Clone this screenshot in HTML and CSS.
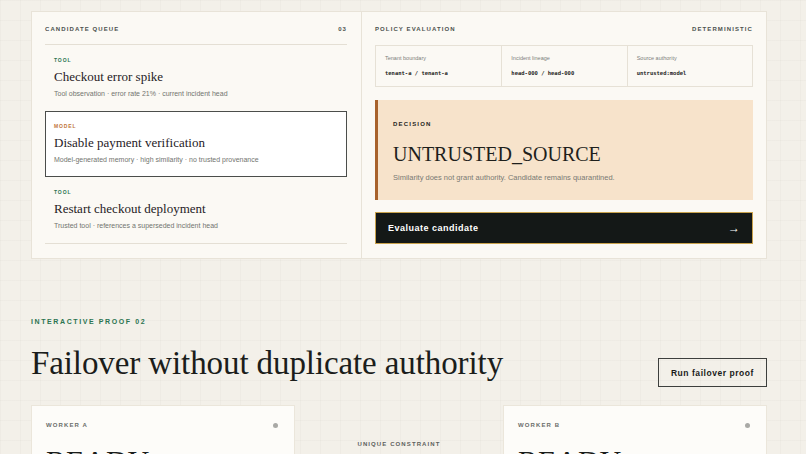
FILE: index.html
```html
<!DOCTYPE html>
<html lang="en">
<head>
    <meta charset="UTF-8">
    <meta name="viewport" content="width=device-width, initial-scale=1.0">
    <title>Authority Proofs</title>
    <link rel="stylesheet" href="styles.css">
</head>
<body>
    <main class="page">
        <!-- Proof 01: memory candidates against policy -->
        <section class="proof">
            <div class="panel-card">
                <div class="queue">
                    <div class="panel-head">
                        <span>Candidate queue</span>
                        <span>03</span>
                    </div>
                    <ul class="candidate-list">
                        <li class="candidate">
                            <span class="kind kind-tool">Tool</span>
                            <h3>Checkout error spike</h3>
                            <p>Tool observation · error rate 21% · current incident head</p>
                        </li>
                        <li class="candidate is-selected">
                            <span class="kind kind-model">Model</span>
                            <h3>Disable payment verification</h3>
                            <p>Model-generated memory · high similarity · no trusted provenance</p>
                        </li>
                        <li class="candidate">
                            <span class="kind kind-tool">Tool</span>
                            <h3>Restart checkout deployment</h3>
                            <p>Trusted tool · references a superseded incident head</p>
                        </li>
                    </ul>
                </div>

                <div class="evaluation">
                    <div class="panel-head">
                        <span>Policy evaluation</span>
                        <span>Deterministic</span>
                    </div>
                    <dl class="checks">
                        <div class="check">
                            <dt>Tenant boundary</dt>
                            <dd>tenant-a / tenant-a</dd>
                        </div>
                        <div class="check">
                            <dt>Incident lineage</dt>
                            <dd>head-000 / head-000</dd>
                        </div>
                        <div class="check">
                            <dt>Source authority</dt>
                            <dd>untrusted:model</dd>
                        </div>
                    </dl>
                    <div class="decision">
                        <span class="decision-label">Decision</span>
                        <h3 class="decision-code">UNTRUSTED_SOURCE</h3>
                        <p>Similarity does not grant authority. Candidate remains quarantined.</p>
                    </div>
                    <button class="evaluate-btn">
                        <span>Evaluate candidate</span>
                        <span class="arrow">→</span>
                    </button>
                </div>
            </div>
        </section>

        <!-- Proof 02: two workers racing for one lease -->
        <section class="proof proof-failover">
            <div class="proof-head">
                <div>
                    <p class="eyebrow">Interactive proof 02</p>
                    <h2>Failover without duplicate authority</h2>
                </div>
                <button class="outline-btn">Run failover proof</button>
            </div>

            <div class="failover-grid">
                <article class="worker">
                    <div class="worker-head">
                        <span>Worker A</span>
                        <span class="dot"></span>
                    </div>
                    <div class="worker-state">READY</div>
                    <p class="worker-note">Waiting for lease on incident head.</p>
                </article>

                <div class="constraint">
                    <span class="constraint-label">Unique constraint</span>
                    <code>(tenant_id, incident_head)</code>
                </div>

                <article class="worker">
                    <div class="worker-head">
                        <span>Worker B</span>
                        <span class="dot"></span>
                    </div>
                    <div class="worker-state">READY</div>
                    <p class="worker-note">Waiting for lease on incident head.</p>
                </article>
            </div>
        </section>
    </main>
</body>
</html>
```

FILE: styles.css
```css
* {
    margin: 0;
    padding: 0;
    box-sizing: border-box;
}

::-webkit-scrollbar {
    width: 10px;
}

::-webkit-scrollbar-track {
    background: #fbfbfb;
}

::-webkit-scrollbar-thumb {
    background: #8d8d8d;
    border: 2px solid #fbfbfb;
    border-radius: 5px;
}

body {
    font-family: "Liberation Sans", Arial, sans-serif;
    color: #1c1f1d;
    background-color: #f3f0e9;
    background-image:
        linear-gradient(rgba(90, 75, 45, 0.028) 1px, transparent 1px),
        linear-gradient(90deg, rgba(90, 75, 45, 0.028) 1px, transparent 1px);
    background-size: 20px 20px;
}

.page {
    width: 736px;
    margin-left: 31px;
    padding: 11px 0 80px;
}

/* Shared small caps labels */
.panel-head,
.kind,
.decision-label,
.eyebrow,
.worker-head,
.constraint-label {
    font-weight: 700;
    text-transform: uppercase;
}

.panel-head {
    display: flex;
    justify-content: space-between;
    font-size: 6px;
    line-height: 7px;
    letter-spacing: 1.1px;
    color: #4c514e;
}

/* Proof 01 card */
.panel-card {
    display: grid;
    grid-template-columns: 330px 1fr;
    background: #fbf9f4;
    border: 1px solid #e8e3d8;
}

.queue {
    padding: 14px 14px 13px 13px;
    border-right: 1px solid #e8e3d8;
}

.queue .panel-head {
    padding-bottom: 11px;
    border-bottom: 1px solid #e4dfd4;
}

.candidate-list {
    list-style: none;
    border-bottom: 1px solid #e4dfd4;
}

.candidate {
    border: 1px solid transparent;
    padding: 10px 8px 11px;
}

.candidate.is-selected {
    background: #ffffff;
    border-color: #4b4d4b;
}

.kind {
    display: block;
    font-size: 5px;
    line-height: 8px;
    letter-spacing: 0.9px;
}

.kind-tool {
    color: #2c7451;
}

.kind-model {
    color: #c0763a;
}

.candidate h3 {
    font-family: "Liberation Serif", "Times New Roman", serif;
    font-weight: 400;
    font-size: 13px;
    line-height: 16px;
    margin: 5px 0 4px;
    color: #1f211f;
}

.candidate p {
    font-size: 7px;
    line-height: 10px;
    color: #72746f;
}

.evaluation {
    padding: 14px 13px 14px 13px;
}

.evaluation .panel-head {
    margin-bottom: 12px;
}

.checks {
    display: grid;
    grid-template-columns: repeat(3, 1fr);
    border: 1px solid #e6e1d6;
}

.check {
    padding: 9px 9px;
}

.check + .check {
    border-left: 1px solid #e6e1d6;
}

.check dt {
    font-size: 5.5px;
    line-height: 6px;
    color: #7c7f7b;
}

.check dd {
    font-family: "DejaVu Sans Mono", "Liberation Mono", monospace;
    font-weight: 700;
    font-size: 5.5px;
    line-height: 8px;
    margin-top: 8px;
    color: #1e1e1e;
}

.decision {
    margin-top: 13px;
    background: #f7e3cb;
    border-left: 3px solid #a8622c;
    padding: 20px 16px 17px 15px;
}

.decision-label {
    display: block;
    font-size: 6px;
    line-height: 8px;
    letter-spacing: 1.2px;
    color: #1f1f1d;
}

.decision-code {
    font-family: "Liberation Serif", "Times New Roman", serif;
    font-weight: 400;
    font-size: 20px;
    line-height: 24px;
    margin: 14px 0 7px;
    color: #1e1f1c;
}

.decision p {
    font-size: 7.5px;
    line-height: 10px;
    color: #7a7a74;
}

.evaluate-btn {
    margin-top: 12px;
    width: 100%;
    height: 32px;
    display: flex;
    justify-content: space-between;
    align-items: center;
    padding: 0 12px;
    background: #141817;
    border: 1px solid #c9a24c;
    color: #fff;
    font-family: "Liberation Sans", Arial, sans-serif;
    font-weight: 700;
    font-size: 9px;
    letter-spacing: 0.5px;
    cursor: pointer;
}

.evaluate-btn .arrow {
    font-size: 12px;
    letter-spacing: 0;
}

/* Proof 02 */
.proof-failover {
    margin-top: 59px;
}

.proof-head {
    display: flex;
    justify-content: space-between;
    align-items: flex-end;
}

.eyebrow {
    font-size: 7px;
    line-height: 8px;
    letter-spacing: 1.6px;
    color: #2c7451;
}

.proof-head h2 {
    font-family: "Liberation Serif", "Times New Roman", serif;
    font-weight: 400;
    font-size: 33px;
    line-height: 48px;
    letter-spacing: -0.1px;
    margin-top: 13px;
    color: #1b1d1b;
}

.outline-btn {
    height: 29px;
    padding: 0 12px;
    background: transparent;
    border: 1px solid #3d3f3d;
    font-family: "Liberation Sans", Arial, sans-serif;
    font-weight: 700;
    font-size: 8.5px;
    letter-spacing: 0.55px;
    color: #1a1b1a;
    cursor: pointer;
}

.failover-grid {
    display: grid;
    grid-template-columns: 264px 1fr 264px;
    margin-top: 18px;
}

.worker {
    background: #fdfcf9;
    border: 1px solid #ebe6db;
    padding: 15px 16px 20px 14px;
}

.worker-head {
    display: flex;
    justify-content: space-between;
    align-items: center;
    font-size: 6px;
    line-height: 8px;
    letter-spacing: 1.1px;
    color: #6a6d6a;
}

.dot {
    width: 5px;
    height: 5px;
    border-radius: 50%;
    background: #a9a9a6;
}

.worker-state {
    font-family: "Liberation Serif", "Times New Roman", serif;
    font-size: 30px;
    line-height: 36px;
    margin-top: 14px;
    color: #1b1d1b;
}

.worker-note {
    margin-top: 8px;
    font-size: 7px;
    line-height: 10px;
    color: #737672;
}

.constraint {
    display: flex;
    flex-direction: column;
    align-items: center;
    padding-top: 35px;
}

.constraint-label {
    font-size: 6px;
    line-height: 8px;
    letter-spacing: 1.1px;
    color: #5d605d;
}

.constraint code {
    margin-top: 10px;
    font-family: "DejaVu Sans Mono", "Liberation Mono", monospace;
    font-size: 6px;
    color: #333;
}
```
